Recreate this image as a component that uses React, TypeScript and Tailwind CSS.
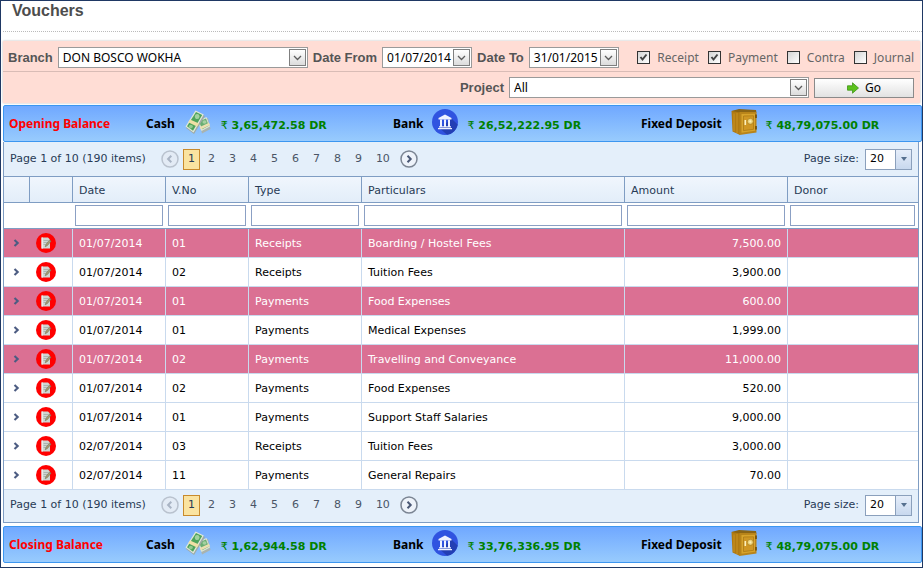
import React from "react";

type Voucher = {
  date: string;
  no: string;
  type: string;
  particulars: string;
  amount: string;
  marked?: boolean;
};

const vouchers: Voucher[] = [
  { date: "01/07/2014", no: "01", type: "Receipts", particulars: "Boarding / Hostel Fees", amount: "7,500.00", marked: true },
  { date: "01/07/2014", no: "02", type: "Receipts", particulars: "Tuition Fees", amount: "3,900.00" },
  { date: "01/07/2014", no: "01", type: "Payments", particulars: "Food Expenses", amount: "600.00", marked: true },
  { date: "01/07/2014", no: "01", type: "Payments", particulars: "Medical Expenses", amount: "1,999.00" },
  { date: "01/07/2014", no: "02", type: "Payments", particulars: "Travelling and Conveyance", amount: "11,000.00", marked: true },
  { date: "01/07/2014", no: "02", type: "Payments", particulars: "Food Expenses", amount: "520.00" },
  { date: "01/07/2014", no: "01", type: "Payments", particulars: "Support Staff Salaries", amount: "9,000.00" },
  { date: "02/07/2014", no: "03", type: "Receipts", particulars: "Tuition Fees", amount: "3,000.00" },
  { date: "02/07/2014", no: "11", type: "Payments", particulars: "General Repairs", amount: "70.00" },
];

const columns = ["Date", "V.No", "Type", "Particulars", "Amount", "Donor"];

function CashIcon() {
  return (
    <svg width="26" height="26" viewBox="0 0 26 26" className="mb-1" aria-hidden="true">
      <path d="M14 12 L23 9 L25.5 20 L17 24.5 Z" fill="#a9b3ae" />
      <path d="M12.5 12 L21.5 8 L25 17.5 L16.5 22 Z" fill="#dfe6d6" />
      <path d="M14 12.5 L21 9.5 L23.8 16.8 L17.2 20.3 Z" fill="#69ae72" />
      <ellipse cx="19.5" cy="13" rx="2" ry="1.7" fill="#a5d0a0" />
      <path d="M14.8 18 L24 13.8 L25 16 L15.8 20.5 Z" fill="#ecdfb0" />
      <path d="M11 3 L20 7 L9 25 L1 19 Z" fill="#9eaaa4" />
      <path d="M10.5 1.5 L18.8 5.5 L8.5 23.5 L0.5 17.5 Z" fill="#e2e9da" />
      <path d="M11 3 L17.2 6 L8 21.8 L2 17.3 Z" fill="#4ea45c" />
      <ellipse cx="12.2" cy="7.5" rx="2.3" ry="2.6" fill="#a3d29f" />
      <ellipse cx="5.8" cy="17.6" rx="2" ry="1.8" fill="#93c990" />
      <path d="M5 10.5 L14 14.5 L12 17.5 L3.2 13.3 Z" fill="#efe0a6" />
    </svg>
  );
}

function BankIcon() {
  return (
    <svg width="26" height="26" viewBox="0 0 26 26" className="mb-1" aria-hidden="true">
      <circle cx="13" cy="13" r="13" fill="#3053e0" />
      <path d="M19.5 9.5 L25.6 15.5 A13 13 0 0 1 15 25.8 L8 19.5 Z" fill="#233fb4" />
      <path d="M13 5.5 L19.5 9 V10.5 H6.5 V9 Z" fill="#f0f2ff" />
      <path d="M8 10.5h2v7H8zM12 10.5h2v7h-2zM16 10.5h2v7h-2zM7 17.3h12v1.2H7zM6 19h14v1.3H6z" fill="#f0f2ff" />
    </svg>
  );
}

function SafeIcon() {
  return (
    <svg width="26" height="26" viewBox="0 0 26 26" className="mb-1" aria-hidden="true">
      <path d="M0.5 2 L9 1 V26 L1.5 22.5 Z" fill="#b07a12" />
      <path d="M0.5 2 L8 0 L25 1 L25.5 3.5 L9 3.5 Z" fill="#8a6414" />
      <path d="M8.5 3 L25.5 3 V23.5 L8.5 26 Z" fill="#b8841a" />
      <path d="M10.5 5 L24 4.8 V21.8 L10.5 23.8 Z" fill="#d8a42c" />
      <path d="M12.5 7 L22.5 6.8 V20.3 L12.5 21.6 Z" fill="#cf9724" stroke="#a87512" strokeWidth="0.7" />
      <path d="M3 4.5v17.5M6 4v20" stroke="#c99322" strokeWidth="1" />
      <circle cx="19.3" cy="12.3" r="3" fill="#ecd37a" stroke="#a87a17" strokeWidth="0.7" />
      <circle cx="19.3" cy="12.3" r="1.1" fill="#fbeeb4" />
      <path d="M14.3 11v5" stroke="#fbf0bd" strokeWidth="1.6" />
      <path d="M25 5.5v3.5M25 17v3.5" stroke="#704d06" strokeWidth="1.6" />
    </svg>
  );
}

function ChevronBox() {
  return (
    <span className="pointer-events-none flex w-[17px] shrink-0 items-center justify-center border border-[#7f7f7f] bg-linear-to-b from-white to-[#dcdcdc]">
      <svg width="9" height="6" viewBox="0 0 9 6" aria-hidden="true">
        <path d="M1 1 L4.5 4.5 L8 1" fill="none" stroke="#5c5c5c" strokeWidth="1.3" />
      </svg>
    </span>
  );
}

const comboBox = "flex h-[21px] border border-[#9a9a9a] bg-white p-px";
const comboText = "min-w-0 flex-1 appearance-none bg-transparent pl-[3px] font-['Noto_Sans',sans-serif] text-[12px] leading-[17px] text-black outline-none";

function SelectBox({ id, value, className }: { id: string; value: string; className: string }) {
  return (
    <div className={`${comboBox} ${className}`}>
      <select id={id} className={comboText} defaultValue={value}>
        <option>{value}</option>
      </select>
      <ChevronBox />
    </div>
  );
}

function DateBox({ id, value }: { id: string; value: string }) {
  return (
    <div className={`${comboBox} w-[90px]`}>
      <input id={id} type="text" defaultValue={value} className={comboText} />
      <button type="button" aria-label="Open calendar" className="flex">
        <ChevronBox />
      </button>
    </div>
  );
}

function FilterLabel({ htmlFor, children }: { htmlFor: string; children: string }) {
  return (
    <label htmlFor={htmlFor} className="shrink-0 text-[13px] font-bold leading-5 text-[#555]">
      {children}
    </label>
  );
}

function Tick({ label, checked }: { label: string; checked?: boolean }) {
  return (
    <label className="flex items-center gap-[7px] font-['Noto_Sans',sans-serif] text-[12px] leading-5 text-[#666]">
      <span className="grid size-[13px]">
        <input
          type="checkbox"
          defaultChecked={checked}
          className="peer col-start-1 row-start-1 size-[13px] appearance-none border border-[#333] bg-linear-to-br from-[#d5d5d5] to-white"
        />
        <svg
          viewBox="0 0 13 13"
          aria-hidden="true"
          className="pointer-events-none invisible col-start-1 row-start-1 size-[13px] peer-checked:visible"
        >
          <path d="M3.5 6 L5.5 8.5 L9.5 3.5" fill="none" stroke="#444" strokeWidth="2" />
        </svg>
      </span>
      {label}
    </label>
  );
}

function Money({ label, value, icon, gap }: { label: string; value: string; icon: React.ReactNode; gap: string }) {
  return (
    <div className={`flex items-center ${gap}`}>
      <span className="text-black">{label}</span>
      {icon}
      <span className="pt-1 font-['DejaVu_Sans',sans-serif] text-[11px] text-[#008000]">
        <span className="font-normal">₹</span> {value}
      </span>
    </div>
  );
}

function BalanceBar({ title, cash, bank, deposit }: { title: string; cash: string; bank: string; deposit: string }) {
  return (
    <section className="grid h-[37px] grid-cols-[137px_247px_248px_1fr] items-center rounded-xs border border-[#3c96f0] bg-linear-to-b from-[#70a8ff] to-[#98cbfd] pl-[5px] font-['Noto_Sans',sans-serif] text-[12px] font-bold leading-5 whitespace-nowrap">
      <h2 className="text-[#f00]">{title}</h2>
      <Money label="Cash" value={cash} icon={<CashIcon />} gap="gap-[10px]" />
      <Money label="Bank" value={bank} icon={<BankIcon />} gap="gap-[9px]" />
      <Money label="Fixed Deposit" value={deposit} icon={<SafeIcon />} gap="gap-[9px]" />
    </section>
  );
}

function RoundArrow({ next }: { next?: boolean }) {
  return (
    <svg width="18" height="18" viewBox="0 0 18 18" aria-hidden="true">
      <circle cx="9" cy="9" r="8" fill={next ? "#eef3fa" : "#e3ebf5"} stroke={next ? "#7b8593" : "#b9c2ce"} strokeWidth="1.5" />
      <path
        d={next ? "M7.5 5.8 L10.7 9 L7.5 12.2" : "M10.3 5.8 L7.1 9 L10.3 12.2"}
        fill="none"
        stroke={next ? "#4a5875" : "#a9b4c4"}
        strokeWidth="2"
      />
    </svg>
  );
}

function Pager({ id, className }: { id: string; className: string }) {
  return (
    <nav aria-label="Pages" className={`flex items-center bg-[#e4effa] px-1.5 text-[#283b56] ${className}`}>
      <span className="mr-[15px]">Page 1 of 10 (190 items)</span>
      <button type="button" aria-label="Previous page" disabled>
        <RoundArrow />
      </button>
      <button type="button" aria-current="page" className="ml-1 h-[21px] w-[17px] border border-[#c88a2c] bg-[#fae3a0]">
        1
      </button>
      <div className="ml-px flex">
        {[2, 3, 4, 5, 6, 7, 8, 9].map((n) => (
          <button key={n} type="button" className="w-[21px] text-[#4a5566]">
            {n}
          </button>
        ))}
        <button type="button" className="w-[28px] text-[#4a5566]">
          10
        </button>
      </div>
      <button type="button" aria-label="Next page" className="ml-[3px]">
        <RoundArrow next />
      </button>
      <label htmlFor={id} className="ml-auto mr-1.5">
        Page size:
      </label>
      <div className="flex h-[21px] w-[47px] border border-[#8ba0bc] bg-white">
        <select id={id} defaultValue="20" className="min-w-0 flex-1 appearance-none bg-transparent pl-1 text-black outline-none">
          <option>20</option>
        </select>
        <span className="pointer-events-none flex w-4 items-center justify-center border-l border-[#8ba0bc] bg-linear-to-b from-[#e6eefa] to-[#c8d8ee]">
          <svg width="6" height="4" viewBox="0 0 6 4" aria-hidden="true">
            <path d="M0 0h6L3 4z" fill="#56708f" />
          </svg>
        </span>
      </div>
    </nav>
  );
}

function EditIcon() {
  return (
    <svg width="20" height="20" viewBox="0 0 20 20" aria-hidden="true">
      <circle cx="10" cy="10" r="10" fill="#f00" />
      <path d="M5.5 4.5 H12 L14 6.5 V15.5 H5.5 Z" fill="#cfd6d2" />
      <path d="M5.5 4.5 H7 V15.5 H5.5 Z" fill="#e9ecea" />
      <path d="M7.5 7.5h5M7.5 9.5h4M7.5 11.5h2" stroke="#a3aca8" strokeWidth="0.8" />
      <path d="M13.6 7 L10 11.3 L9.2 13.8 L11.4 12.5 L15 8.2 Z" fill="#a89c70" stroke="#77745c" strokeWidth="0.6" />
    </svg>
  );
}

function Row({ v }: { v: Voucher }) {
  const iconCell = "border-r border-b border-[#c9daee] px-1.5";
  const cell = `${iconCell} pt-0.5`;
  return (
    <tr className={`h-[29px] ${v.marked ? "bg-[#db7093] text-white" : "bg-white text-black"}`}>
      <td className="border-b border-[#c9daee] pl-[9px]">
        <button type="button" aria-label="Expand voucher" className="block">
          <svg width="8" height="8" viewBox="0 0 8 8" aria-hidden="true">
            <path d="M1.5 1 L4.7 4 L1.5 7" fill="none" stroke="#4c5c82" strokeWidth="2.1" />
          </svg>
        </button>
      </td>
      <td className={iconCell}>
        <button type="button" aria-label="Edit voucher" className="block">
          <EditIcon />
        </button>
      </td>
      <td className={cell}>{v.date}</td>
      <td className={cell}>{v.no}</td>
      <td className={cell}>{v.type}</td>
      <td className={cell}>{v.particulars}</td>
      <td className={`${cell} text-right`}>{v.amount}</td>
      <td className="border-b border-[#c9daee]" />
    </tr>
  );
}

export default function App() {
  return (
    <main className="border border-[#1f3864] bg-white pb-1 pl-0.5 font-['Liberation_Sans',Arial,sans-serif]">
      <h1 className="h-[31px] border-b border-dotted border-[#bbb] pl-[9px] text-[16px] font-bold leading-5 text-[#4d4d4d]">
        Vouchers
      </h1>

      <form className="mr-0.5 mt-[9px] bg-[#ffddd5] shadow-[0_0_2px_#bbb]">
        <div className="flex h-[31px] items-center border-b border-[#d9bcb6] pl-[5px] pr-1.5 pt-[3px]">
          <FilterLabel htmlFor="branch">Branch</FilterLabel>
          <SelectBox id="branch" value="DON BOSCO WOKHA" className="ml-[5px] mr-[5px] w-[250px]" />
          <FilterLabel htmlFor="from">Date From</FilterLabel>
          <div className="mx-[5px]">
            <DateBox id="from" value="01/07/2014" />
          </div>
          <FilterLabel htmlFor="to">Date To</FilterLabel>
          <div className="ml-[5px]">
            <DateBox id="to" value="31/01/2015" />
          </div>
          <div className="ml-auto flex gap-[9px]">
            <Tick label="Receipt" checked />
            <Tick label="Payment" checked />
            <Tick label="Contra" />
            <Tick label="Journal" />
          </div>
        </div>
        <div className="flex h-[31px] items-center justify-end pr-1.5">
          <FilterLabel htmlFor="project">Project</FilterLabel>
          <SelectBox id="project" value="All" className="ml-[5px] mr-[5px] w-[300px]" />
          <button
            type="button"
            className="flex h-5 w-[100px] items-center justify-center gap-1.5 border border-[#8a8a8a] bg-linear-to-b from-white to-[#e2e2e2] font-['Noto_Sans',sans-serif] text-[12px] leading-4 text-black"
          >
            <svg width="12" height="12" viewBox="0 0 12 12" aria-hidden="true">
              <path d="M0.5 3.8 H5.5 V0.8 L11.5 6 L5.5 11.2 V8.2 H0.5 Z" fill="#5cc21c" stroke="#3f9415" strokeWidth="0.8" />
            </svg>
            Go
          </button>
        </div>
      </form>

      <div className="mt-0.5">
        <BalanceBar title="Opening Balance" cash="3,65,472.58 DR" bank="26,52,222.95 DR" deposit="48,79,075.00 DR" />
      </div>

      <div className="mr-[3px] border-x border-b border-[#7f9dc3] font-['DejaVu_Sans',Verdana,sans-serif] text-[11px] leading-4">
        <Pager id="size-top" className="h-[35px] border-b border-[#7f9dc3]" />
        <table className="w-full table-fixed border-separate border-spacing-0">
          <colgroup>
            <col className="w-[26px]" />
            <col className="w-[43px]" />
            <col className="w-[93px]" />
            <col className="w-[83px]" />
            <col className="w-[113px]" />
            <col />
            <col className="w-[163px]" />
            <col className="w-[130px]" />
          </colgroup>
          <thead>
            <tr className="h-[26px] bg-linear-to-b from-[#f0f6fd] to-[#e2edf9] text-left text-[#283b56]">
              <td className="border-r border-b border-[#7f9dc3]" />
              <td className="border-r border-b border-[#7f9dc3]" />
              {columns.map((c) => (
                <th key={c} className="border-r border-b border-[#7f9dc3] px-1.5 pt-0.5 font-normal last:border-r-0">
                  {c}
                </th>
              ))}
            </tr>
            <tr className="h-[26px]">
              <td className="border-b border-[#7f9dc3]" />
              <td className="border-b border-[#7f9dc3]" />
              {columns.map((c) => (
                <td key={c} className="border-b border-[#7f9dc3] py-0.5 pl-0.5 pr-[3px]">
                  <input type="text" aria-label={`Filter by ${c}`} className="block h-[21px] w-full border border-[#8ba0c4] bg-white px-1 outline-none" />
                </td>
              ))}
            </tr>
          </thead>
          <tbody>
            {vouchers.map((v, i) => (
              <Row key={i} v={v} />
            ))}
          </tbody>
        </table>
        <Pager id="size-bottom" className="h-8 pb-0.5" />
      </div>

      <div className="mt-[3px]">
        <BalanceBar title="Closing Balance" cash="1,62,944.58 DR" bank="33,76,336.95 DR" deposit="48,79,075.00 DR" />
      </div>
    </main>
  );
}
